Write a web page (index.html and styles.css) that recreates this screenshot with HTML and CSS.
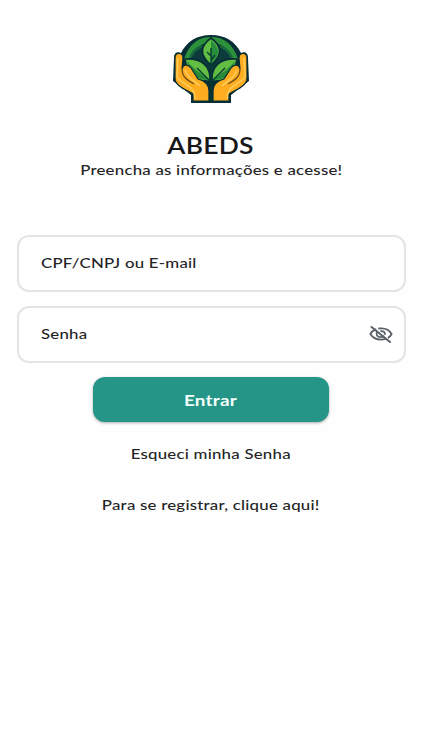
FILE: index.html
```html
<!DOCTYPE html>
<html lang="pt-BR">
<head>
<meta charset="utf-8">
<meta name="viewport" content="width=device-width, initial-scale=1">
<title>ABEDS</title>
<link rel="stylesheet" href="styles.css">
</head>
<body>
<main class="login">
  <svg class="logo" viewBox="0 0 76 70" aria-label="ABEDS">
    <path d="M8 19C14 7 24 1 38 1s24 6 30 18c5-2 7 1 7 5l1 23-18 14v8H18v-8L0 47l1-23c0-4 2-7 7-5Z" fill="#072d35"/>
    <path d="M11 25C16 10 25 3 38 3s22 7 27 22l-4 7C57 17 50 9 38 9S19 17 15 32Z" fill="#2d913c"/>
    <path d="M15 31C17 18 26 9 38 9s21 9 23 22L38 45Z" fill="#0b3b3b"/>
    <path d="M17 24c3-7 7-10 12-12M59 24c-3-7-7-10-12-12" fill="none" stroke="#17663c" stroke-width="2.5"/>
    <path d="M38 4c-11 8-12 17 0 27 12-10 11-19 0-27Z" fill="#62bd43" stroke="#072d35" stroke-width="1.7"/>
    <path d="M38 6v24c10-9 9-16 0-24Z" fill="#278f3b"/>
    <path d="M12 25c17-1 26 7 25 22-15 1-23-6-25-22Z" fill="#62bd43" stroke="#072d35" stroke-width="1.7"/>
    <path d="M14 27c6 8 14 12 22 19-13 0-20-7-22-19Z" fill="#26893a"/>
    <path d="M64 25c-17-1-26 7-25 22 15 1 23-6 25-22Z" fill="#62bd43" stroke="#072d35" stroke-width="1.7"/>
    <path d="M62 27c-6 8-14 12-22 19 13 0 20-7 22-19Z" fill="#26893a"/>
    <path d="M38 14v54M38 26l4-5M38 22l-4-4M37 47 24 34M39 47l13-13" fill="none" stroke="#073b34" stroke-width="1.4"/>
    <path d="M2 24c0-6 8-6 8 0l-1 11c1-5 6-5 9-1l7 11c7 2 11 6 11 12v10H20v-7C12 55 2 52 2 44Z" fill="#ffad20" stroke="#072d35" stroke-width="1.2"/>
    <path d="M5 24 4 43c6 8 18 8 18 22M12 36c2 8 10 11 15 16" fill="none" stroke="#ffca55" stroke-width="1.6"/>
    <path d="M9 35c0 9 7 12 12 15" fill="none" stroke="#684719" stroke-width="1.2"/>
    <g transform="matrix(-1 0 0 1 76 0)">
      <path d="M2 24c0-6 8-6 8 0l-1 11c1-5 6-5 9-1l7 11c7 2 11 6 11 12v10H20v-7C12 55 2 52 2 44Z" fill="#ffad20" stroke="#072d35" stroke-width="1.2"/>
      <path d="M5 24 4 43c6 8 18 8 18 22M12 36c2 8 10 11 15 16" fill="none" stroke="#ffca55" stroke-width="1.6"/>
      <path d="M9 35c0 9 7 12 12 15" fill="none" stroke="#684719" stroke-width="1.2"/>
    </g>
  </svg>
  <h1 class="title"><span class="wide wide-title">ABEDS</span></h1>
  <p class="subtitle"><span class="wide wide-subtitle">Preencha as informações e acesse!</span></p>
  <div class="field"><span class="wide wide-user">CPF/CNPJ ou E-mail</span></div>
  <div class="field field-password">
    <span class="wide wide-password">Senha</span>
    <svg class="eye" viewBox="0 0 24 20" fill="none" stroke="#596067" stroke-width="1.8" stroke-linecap="round">
      <path d="M6.5 5.4C4.2 6.4 2.5 8 1.4 10c2.1 3.7 6.1 5.6 10.6 5.6 1.6 0 3.1-.2 4.5-.7M10 4.5c5.6-.7 10.5 1.6 12.6 5.5-.7 1.4-1.7 2.5-3.1 3.5M8.2 7.6c-2 2.8.2 5.5 3.5 5.5 1 0 2-.2 2.8-.8M12 7.1c2.4 0 3.9 1.2 3.9 2.9"/>
      <path d="M2.5 3 21 18" stroke-width="2"/>
    </svg>
  </div>
  <button class="submit"><span class="wide wide-submit">Entrar</span></button>
  <a class="link"><span class="wide wide-forgot">Esqueci minha Senha</span></a>
  <a class="link link-register"><span class="wide wide-register">Para se registrar, clique aqui!</span></a>
</main>
</body>
</html>
```
FILE: styles.css
```css
* { box-sizing: border-box; }
body { margin: 0; background: #fefefe; color: #242426; font-family: Lato, "Open Sans", sans-serif; font-size: 14px; font-weight: 500; }
.login { display: flex; flex-direction: column; align-items: center; min-height: 750px; padding: 34px 17px 0; }
.logo { width: 76px; height: 70px; flex: none; }
.title { margin: 27px 0 0; font-size: 23px; line-height: 28px; font-weight: 600; color: #171719; }
.subtitle { margin: 1px 0 0; line-height: 20px; }
.wide { display: inline-block; white-space: nowrap; letter-spacing: .2px; transform: scaleX(var(--stretch, 1)); }
.wide-title { --stretch: 1.15; }
.wide-subtitle { --stretch: 1.2; }
.wide-user, .wide-password { --stretch: 1.2; transform-origin: left; position: relative; top: -1px; }
.wide-submit { --stretch: 1.18; }
.wide-forgot, .wide-register { --stretch: 1.2; }
.field { display: flex; align-items: center; justify-content: space-between; width: 389px; height: 57px; padding: 0 11px 1px 22px; margin-top: 55px; border: 2px solid #e4e4e7; border-radius: 12px; background: #fff; flex: none; }
.field-password { margin-top: 14px; }
.eye { width: 24px; height: 20px; }
.submit { width: 236px; height: 45px; margin: 14px 0 0; padding: 0; border: 0; border-radius: 12px; background: #259587; color: #f5fffd; box-shadow: 0 1px 3px #0005; font: 700 16px/45px Lato, sans-serif; flex: none; }
.link { margin-top: 22px; line-height: 20px; }
.link-register { margin-top: 31px; }
```
